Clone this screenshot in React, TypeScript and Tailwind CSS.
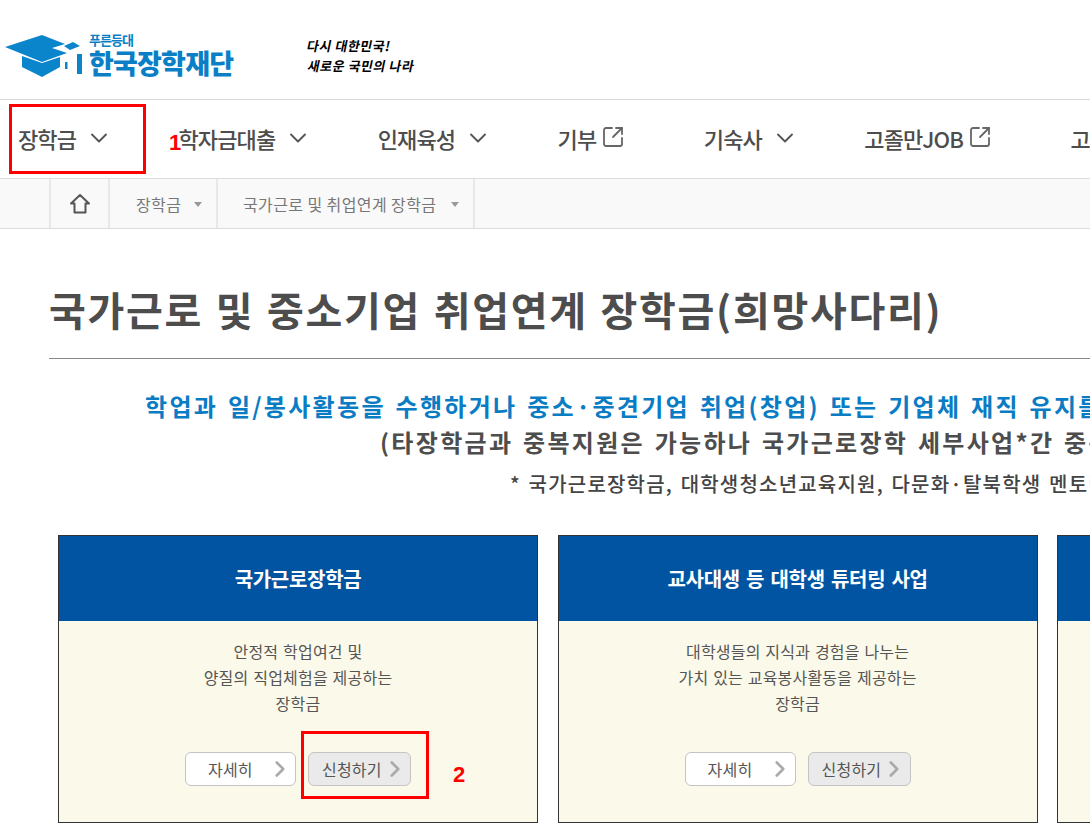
import { ChevronDown, ChevronRight, SquareArrowOutUpRight } from "lucide-react";

const font = "font-['Noto_Sans_CJK_KR','Liberation_Sans',sans-serif]";

const nav = [
  { label: "장학금", external: false },
  { label: "학자금대출", external: false },
  { label: "인재육성", external: false },
  { label: "기부", external: true },
  { label: "기숙사", external: false },
  { label: "고졸만JOB", external: true },
  { label: "고객지원", external: false },
];

const cards = [
  {
    title: "국가근로장학금",
    lines: ["안정적 학업여건 및", "양질의 직업체험을 제공하는", "장학금"],
  },
  {
    title: "교사대생 등 대학생 튜터링 사업",
    lines: ["대학생들의 지식과 경험을 나누는", "가치 있는 교육봉사활동을 제공하는", "장학금"],
  },
  {
    title: "대학생 청소년 교육지원",
    lines: ["청소년들의 학습을 돕는", "교육봉사활동을 제공하는", "장학금"],
  },
];

function Logo() {
  return (
    <div className="flex items-center gap-[4px] pl-[5px]">
      <svg width="80" height="44" viewBox="0 0 80 44" fill="#0a84cb">
        <path d="M0 13 L37 1 L60 10 L47 14 L62 19 L37 28 Z" />
        <path d="M59 12 L68 8 L75 12 L65 16 Z" />
        <path d="M17 22 L37 29 L55 23 V33 L37 43 L17 33 Z" />
        <rect x="60" y="28" width="2.5" height="7" />
        <rect x="72" y="20" width="5" height="20" />
      </svg>
      <div className="flex flex-col text-[#0a7fc6]">
        <span className="text-[13px] leading-[14px] font-bold tracking-[-1px]">푸른등대</span>
        <span className="text-[27px] leading-[32px] font-extrabold tracking-[-0.8px]">한국장학재단</span>
      </div>
    </div>
  );
}

function Slogan() {
  return (
    <div className="ml-[72px] flex flex-col items-start -skew-x-12 text-[13px] leading-[20px] font-bold tracking-[0.5px] text-black">
      <span>다시 대한민국!</span>
      <span className="pl-[5px]">새로운 국민의 나라</span>
    </div>
  );
}

function NavItem({ label, external }: { label: string; external: boolean }) {
  return (
    <div className={`flex shrink-0 items-center ${external ? "mr-[13px]" : ""}`}>
      <span className="text-[22px] leading-[30px] font-medium tracking-[-0.9px] text-[#4d4d4d]">{label}</span>
      {external ? (
        <SquareArrowOutUpRight className="mb-[2px] ml-[5px] size-[24px] text-[#666]" strokeWidth={1.8} />
      ) : (
        <ChevronDown className="ml-[9px] size-[28px] text-[#555]" strokeWidth={1.6} />
      )}
    </div>
  );
}

function Crumb({ label, width, pad }: { label: string; width: string; pad: string }) {
  return (
    <div className={`flex h-full items-center justify-between border-r-2 border-[#e8e8e8] pr-[14px] ${pad} ${width}`}>
      <span className="text-[16px] tracking-[0.4px] text-[#777]">{label}</span>
      <span className="mt-[1px] h-0 w-0 border-x-[4px] border-t-[5px] border-x-transparent border-t-[#999]" />
    </div>
  );
}

function Card({ title, lines }: { title: string; lines: string[] }) {
  return (
    <div className="flex h-[288px] w-[480px] shrink-0 flex-col border border-[#333] bg-[#fbf9ea]">
      <div className="flex h-[85px] items-center justify-center bg-[#0054a2] text-[20px] font-bold tracking-[-0.3px] text-white [word-spacing:2px]">
        {title}
      </div>
      <div className="flex flex-col items-center pt-[17px] text-[16px] leading-[26px] tracking-[0.2px] text-[#555] [word-spacing:1px]">
        {lines.map((line) => (
          <p key={line}>{line}</p>
        ))}
        <div className="mt-[36px] flex gap-[12px]">
          <button className="relative flex h-[34px] w-[111px] items-center rounded-[6px] border border-[#c4c4c4] bg-white pl-[22px] text-[#555]">
            자세히
            <ChevronRight className="absolute right-[2px] size-[26px] text-[#aaa]" strokeWidth={2.4} />
          </button>
          <button className="flex h-[34px] w-[103px] items-center rounded-[6px] border border-[#c4c4c4] bg-[#eaeaea] pl-[13px] text-[#555]">
            신청하기
            <ChevronRight className="size-[26px] shrink-0 text-[#aaa]" strokeWidth={2.4} />
          </button>
        </div>
      </div>
    </div>
  );
}

export default function App() {
  return (
    <div className={`relative h-[826px] w-[1090px] overflow-hidden bg-white ${font}`}>
      <header className="flex h-[100px] items-center border-b border-[#d9d9d9] pt-[12px]">
        <Logo />
        <Slogan />
      </header>

      <nav className="flex h-[78px] items-center gap-[65.5px] pb-[2px] pl-[18px]">
        {nav.map((item) => (
          <NavItem key={item.label} label={item.label} external={item.external} />
        ))}
      </nav>

      <div className="flex h-[51px] border-y border-[#dcdcdc] bg-[#f9f9f9] pl-[49px]">
        <div className="flex h-full w-[61px] items-center justify-center border-x-2 border-[#e8e8e8]">
          <svg width="22" height="22" viewBox="0 0 22 22" fill="none" stroke="#555" strokeWidth="2" strokeLinejoin="round">
            <path d="M11 2 L20 10.5 H16.5 V19.5 H5.5 V10.5 H2 Z" />
          </svg>
        </div>
        <Crumb label="장학금" width="w-[108px]" pad="pl-[26px]" />
        <Crumb label="국가근로 및 취업연계 장학금" width="w-[257px]" pad="pl-[25px]" />
      </div>

      <main className="pl-[49px]">
        <h1 className="flex h-[130px] items-center border-b border-[#888] pt-[30px] text-[40px] font-bold tracking-[1.7px] whitespace-nowrap text-[#4d4d4d] [word-spacing:2px]">
          국가근로 및 중소기업 취업연계 장학금(희망사다리)
        </h1>

        <div className="pt-[27px] font-bold whitespace-nowrap [word-spacing:2px]">
          <p className="pl-[96px] text-[24px] leading-[40px] tracking-[2.3px] text-[#0a7cc4]">
            학업과 일/봉사활동을 수행하거나 중소·중견기업 취업(창업) 또는 기업체 재직 유지를 지원합니다
          </p>
          <p className="pl-[331px] text-[24px] leading-[31px] tracking-[2.3px] text-[#4d4d4d]">
            (타장학금과 중복지원은 가능하나 국가근로장학 세부사업*간 중복지원은 불가)
          </p>
          <p className="pt-[13px] pl-[461px] text-[20px] leading-[28px] font-medium tracking-[1.2px] text-[#444]">
            * 국가근로장학금, 대학생청소년교육지원, 다문화·탈북학생 멘토링
          </p>
        </div>

        <div className="flex gap-[19.6px] pt-[37px] pl-[9px]">
          {cards.map((card) => (
            <Card key={card.title} title={card.title} lines={card.lines} />
          ))}
        </div>
      </main>

      {/* red markers drawn over the capture */}
      <div className="absolute top-[104px] left-[9px] h-[70px] w-[137px] border-[3px] border-[#f00]" />
      <span className="absolute top-[128px] left-[169px] font-['Liberation_Sans',sans-serif] text-[22px] leading-[30px] font-bold text-[#f00]">1</span>
      <div className="absolute top-[731px] left-[301px] h-[68px] w-[128px] border-[3px] border-[#f00]" />
      <span className="absolute top-[760px] left-[453px] font-['Liberation_Sans',sans-serif] text-[22px] leading-[30px] font-bold text-[#f00]">2</span>
    </div>
  );
}
